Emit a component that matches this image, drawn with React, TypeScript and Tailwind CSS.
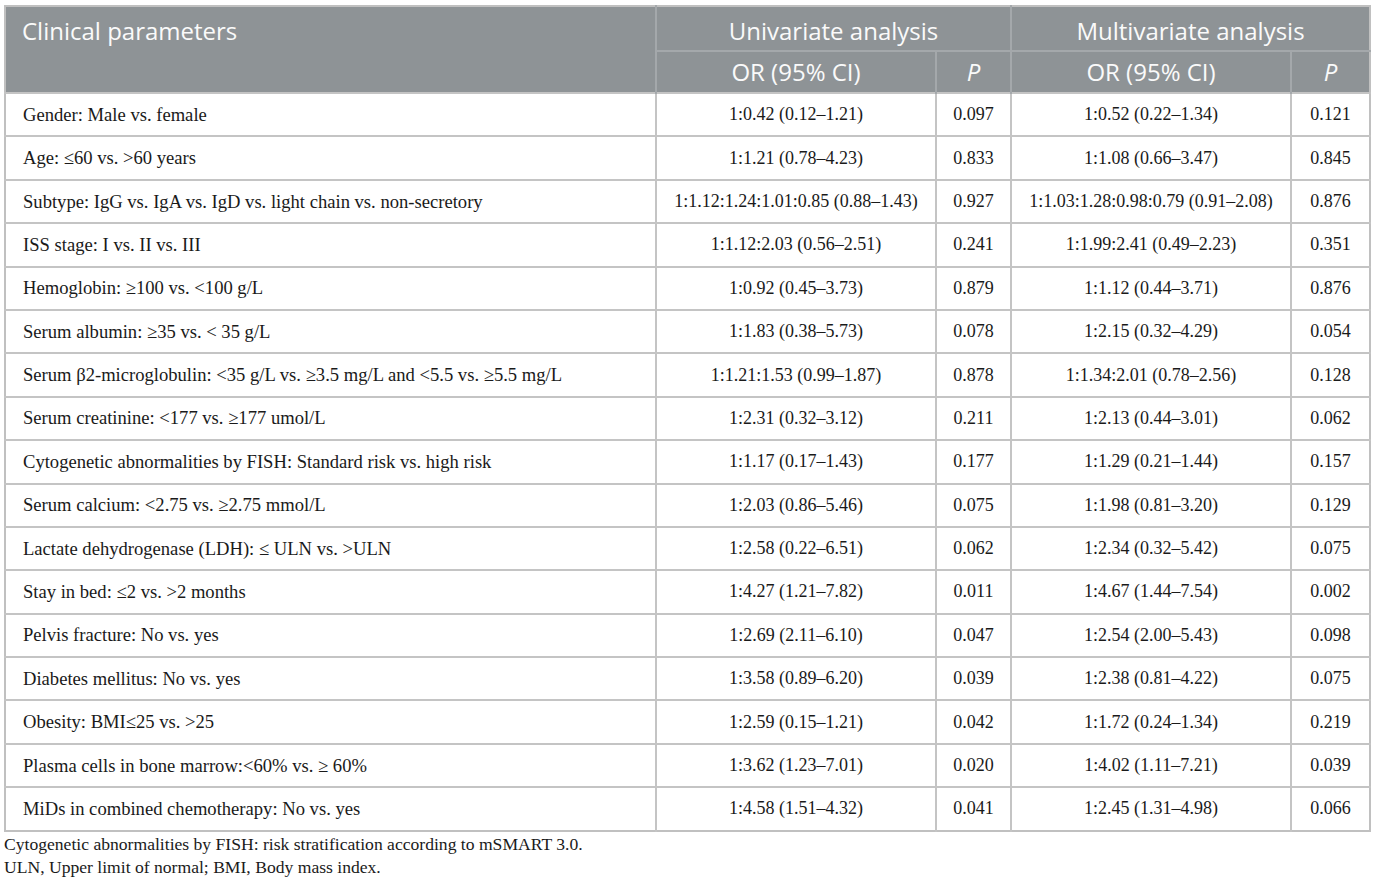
const ROWS: [string, string, string, string, string][] = [
  ['Gender: Male vs. female', '1:0.42 (0.12–1.21)', '0.097', '1:0.52 (0.22–1.34)', '0.121'],
  ['Age: ≤60 vs. >60 years', '1:1.21 (0.78–4.23)', '0.833', '1:1.08 (0.66–3.47)', '0.845'],
  ['Subtype: IgG vs. IgA vs. IgD vs. light chain vs. non-secretory', '1:1.12:1.24:1.01:0.85 (0.88–1.43)', '0.927', '1:1.03:1.28:0.98:0.79 (0.91–2.08)', '0.876'],
  ['ISS stage: I vs. II vs. III', '1:1.12:2.03 (0.56–2.51)', '0.241', '1:1.99:2.41 (0.49–2.23)', '0.351'],
  ['Hemoglobin: ≥100 vs. <100 g/L', '1:0.92 (0.45–3.73)', '0.879', '1:1.12 (0.44–3.71)', '0.876'],
  ['Serum albumin: ≥35 vs. < 35 g/L', '1:1.83 (0.38–5.73)', '0.078', '1:2.15 (0.32–4.29)', '0.054'],
  ['Serum β2-microglobulin: <35 g/L vs. ≥3.5 mg/L and <5.5 vs. ≥5.5 mg/L', '1:1.21:1.53 (0.99–1.87)', '0.878', '1:1.34:2.01 (0.78–2.56)', '0.128'],
  ['Serum creatinine: <177 vs. ≥177 umol/L', '1:2.31 (0.32–3.12)', '0.211', '1:2.13 (0.44–3.01)', '0.062'],
  ['Cytogenetic abnormalities by FISH: Standard risk vs. high risk', '1:1.17 (0.17–1.43)', '0.177', '1:1.29 (0.21–1.44)', '0.157'],
  ['Serum calcium: <2.75 vs. ≥2.75 mmol/L', '1:2.03 (0.86–5.46)', '0.075', '1:1.98 (0.81–3.20)', '0.129'],
  ['Lactate dehydrogenase (LDH): ≤ ULN vs. >ULN', '1:2.58 (0.22–6.51)', '0.062', '1:2.34 (0.32–5.42)', '0.075'],
  ['Stay in bed: ≤2 vs. >2 months', '1:4.27 (1.21–7.82)', '0.011', '1:4.67 (1.44–7.54)', '0.002'],
  ['Pelvis fracture: No vs. yes', '1:2.69 (2.11–6.10)', '0.047', '1:2.54 (2.00–5.43)', '0.098'],
  ['Diabetes mellitus: No vs. yes', '1:3.58 (0.89–6.20)', '0.039', '1:2.38 (0.81–4.22)', '0.075'],
  ['Obesity: BMI≤25 vs. >25', '1:2.59 (0.15–1.21)', '0.042', '1:1.72 (0.24–1.34)', '0.219'],
  ['Plasma cells in bone marrow:<60% vs. ≥ 60%', '1:3.62 (1.23–7.01)', '0.020', '1:4.02 (1.11–7.21)', '0.039'],
  ['MiDs in combined chemotherapy: No vs. yes', '1:4.58 (1.51–4.32)', '0.041', '1:2.45 (1.31–4.98)', '0.066'],
]

export default function App() {
  return (
    <div className="w-[1375px] h-[881px] bg-white pt-[5px] pl-[4px] font-['Liberation_Serif',serif] text-[#1a1a1a]">
      <table className="table-fixed border-collapse w-[1365px] border-2 border-[#c0c0c0]">
        <colgroup>
          <col className="w-[651px]" />
          <col className="w-[280px]" />
          <col className="w-[75px]" />
          <col className="w-[280px]" />
          <col className="w-[79px]" />
        </colgroup>
        <thead className="bg-[#8e9396] text-[#fafafa] font-['Open_Sans',sans-serif] text-[24px]">
          <tr className="h-[45px]">
            <th rowSpan={2} className="text-left align-top font-normal pl-[16px] pt-[6px] leading-[36px] border-r-2 border-[#a4a8ab]">
              Clinical parameters
            </th>
            <th colSpan={2} className="font-normal pt-[4px] leading-[36px] border-r-2 border-b-2 border-[#a4a8ab]">
              Univariate analysis
            </th>
            <th colSpan={2} className="font-normal pt-[4px] leading-[36px] border-b-2 border-[#a4a8ab]">
              Multivariate analysis
            </th>
          </tr>
          <tr className="h-[42px]">
            <th className="font-normal leading-[36px] border-r-2 border-[#a4a8ab]">OR (95% CI)</th>
            <th className="font-normal italic leading-[36px] border-r-2 border-[#a4a8ab]">P</th>
            <th className="font-normal leading-[36px] border-r-2 border-[#a4a8ab]">OR (95% CI)</th>
            <th className="font-normal italic leading-[36px]">P</th>
          </tr>
        </thead>
        <tbody className="text-[18px]">
          {ROWS.map((r) => (
            <tr key={r[0]} className="h-[43.4px] border-t-2 border-[#c4c4c4]">
              <td className="pl-[17px] text-[18.6px] border-r-2 border-[#c4c4c4]">{r[0]}</td>
              <td className="text-center border-r-2 border-[#c4c4c4]">{r[1]}</td>
              <td className="text-center border-r-2 border-[#c4c4c4]">{r[2]}</td>
              <td className="text-center border-r-2 border-[#c4c4c4]">{r[3]}</td>
              <td className="text-center">{r[4]}</td>
            </tr>
          ))}
        </tbody>
      </table>
      <div className="text-[17.6px] leading-[23px] pt-[1px]">
        <p>Cytogenetic abnormalities by FISH: risk stratification according to mSMART 3.0.</p>
        <p>ULN, Upper limit of normal; BMI, Body mass index.</p>
      </div>
    </div>
  )
}
